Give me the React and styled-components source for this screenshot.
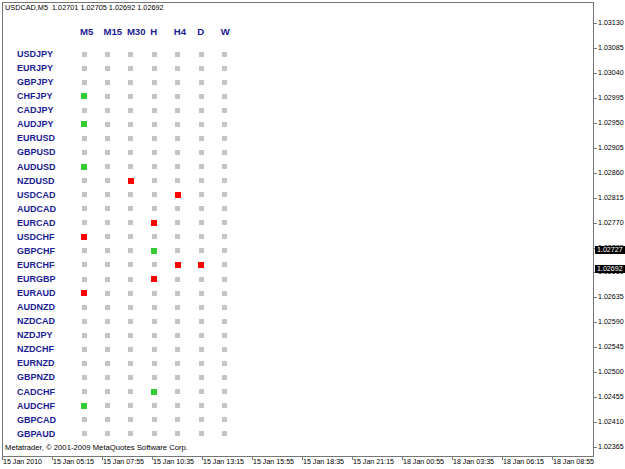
import React from 'react';
import styled, { createGlobalStyle, css } from 'styled-components';

const GlobalStyle = createGlobalStyle`
  html, body { margin: 0; padding: 0; background: #ffffff; }
  body { font-family: "Liberation Sans", Arial, sans-serif; }
  #root { width: 625px; height: 469px; }
`;

const FRAME = '#767676';
const NAVY = '#1c1c94';

const Window = styled.div`
  width: 625px;
  height: 469px;
  box-sizing: border-box;
  padding: 2px 0 0 2px;
  display: grid;
  grid-template-columns: 592px 1fr;
  grid-template-rows: 455px 1fr;
  background: #ffffff;
  overflow: hidden;
`;

const Chart = styled.section`
  box-sizing: border-box;
  border: 1px solid ${FRAME};
  display: flex;
  flex-direction: column;
  min-height: 0;
  overflow: hidden;
`;

const Title = styled.div`
  padding-left: 2px;
  height: 10px;
  font-size: 7.3px;
  line-height: 10px;
  color: #000;
  white-space: pre;
`;

const gridCols = css`
  display: grid;
  grid-template-columns: 63px repeat(7, 23.45px);
  padding-left: 14px;
`;

const HeaderGrid = styled.div`
  ${gridCols};
  margin-top: 12px;
  height: 14px;
`;

const BodyGrid = styled.div`
  ${gridCols};
  margin-top: 8px;
  grid-auto-rows: 14.07px;
`;

const HeadCell = styled.div`
  font-weight: bold;
  font-size: 9.6px;
  line-height: 14px;
  color: ${NAVY};
  white-space: nowrap;
`;

const PairCell = styled.div`
  font-weight: bold;
  font-size: 9px;
  line-height: 14.07px;
  color: ${NAVY};
  white-space: nowrap;
`;

const SquareCell = styled.div`
  width: 8px;
  display: flex;
  align-items: center;
  justify-content: center;
`;

const Square = styled.span`
  display: block;
  width: ${p => (p.$color ? 6 : 5)}px;
  height: ${p => (p.$color ? 6 : 5)}px;
  background: ${p => p.$color || '#c4c4c4'};
`;

const Footer = styled.div`
  margin-top: auto;
  margin-bottom: 3px;
  padding-left: 2px;
  height: 10px;
  font-size: 7.7px;
  line-height: 10px;
  color: #000;
  white-space: pre;
`;

const PriceAxis = styled.div`
  position: relative;
  display: flex;
  flex-direction: column;
  padding-top: 9.55px;
`;

const PriceRow = styled.div`
  height: 24.9px;
  flex: none;
  display: flex;
  align-items: center;
`;

const HTick = styled.span`
  width: 3px;
  height: 1px;
  background: ${FRAME};
  flex: none;
`;

const PriceLabel = styled.span`
  margin-left: 1px;
  font-size: 7.1px;
  line-height: 9px;
  color: #000;
  white-space: nowrap;
`;

const PriceTag = styled.div`
  position: absolute;
  left: 1px;
  right: 0;
  top: ${p => p.$top}px;
  height: 8px;
  background: #000;
  color: #fff;
  font-size: 7.1px;
  line-height: 8px;
  padding-left: 2px;
  white-space: nowrap;
`;

const TimeAxis = styled.div`
  grid-column: 1 / span 2;
  display: flex;
`;

const TimeItem = styled.div`
  width: 50px;
  flex: none;
  display: flex;
  flex-direction: column;
`;

const VTick = styled.span`
  width: 1px;
  height: 3px;
  background: ${FRAME};
`;

const TimeLabel = styled.span`
  margin-left: 1px;
  margin-top: -2px;
  font-size: 7.1px;
  line-height: 9px;
  color: #000;
  white-space: nowrap;
`;

const GREEN = '#33cc33';
const RED = '#ff0000';

const headers = ['M5', 'M15', 'M30', 'H', 'H4', 'D', 'W'];

const pairs = [
  ['USDJPY', {}],
  ['EURJPY', {}],
  ['GBPJPY', {}],
  ['CHFJPY', { 0: GREEN }],
  ['CADJPY', {}],
  ['AUDJPY', { 0: GREEN }],
  ['EURUSD', {}],
  ['GBPUSD', {}],
  ['AUDUSD', { 0: GREEN }],
  ['NZDUSD', { 2: RED }],
  ['USDCAD', { 4: RED }],
  ['AUDCAD', {}],
  ['EURCAD', { 3: RED }],
  ['USDCHF', { 0: RED }],
  ['GBPCHF', { 3: GREEN }],
  ['EURCHF', { 4: RED, 5: RED }],
  ['EURGBP', { 3: RED }],
  ['EURAUD', { 0: RED }],
  ['AUDNZD', {}],
  ['NZDCAD', {}],
  ['NZDJPY', {}],
  ['NZDCHF', {}],
  ['EURNZD', {}],
  ['GBPNZD', {}],
  ['CADCHF', { 3: GREEN }],
  ['AUDCHF', { 0: GREEN }],
  ['GBPCAD', {}],
  ['GBPAUD', {}],
];

const prices = [];
for (let i = 0; i < 18; i++) {
  prices.push((1.0313 - i * 0.00045).toFixed(5));
}

const times = [
  '15 Jan 2010', '15 Jan 05:15', '15 Jan 07:55', '15 Jan 10:35', '15 Jan 13:15',
  '15 Jan 15:55', '15 Jan 18:35', '15 Jan 21:15', '18 Jan 00:55', '18 Jan 03:35',
  '18 Jan 06:15', '18 Jan 08:55',
];

export default function App() {
  return (
    <>
      <GlobalStyle />
      <Window>
        <Chart>
          <Title>{'USDCAD,M5  1.02701 1.02705 1.02692 1.02692'}</Title>
          <HeaderGrid>
            <span />
            {headers.map(h => (
              <HeadCell key={h}>{h}</HeadCell>
            ))}
          </HeaderGrid>
          <BodyGrid>
            {pairs.map(([name, sig]) => (
              <React.Fragment key={name}>
                <PairCell>{name}</PairCell>
                {headers.map((h, i) => (
                  <SquareCell key={h}>
                    <Square $color={sig[i]} />
                  </SquareCell>
                ))}
              </React.Fragment>
            ))}
          </BodyGrid>
          <Footer>{'Metatrader, © 2001-2009 MetaQuotes Software Corp.'}</Footer>
        </Chart>
        <PriceAxis>
          {prices.map(p => (
            <PriceRow key={p}>
              <HTick />
              <PriceLabel>{p}</PriceLabel>
            </PriceRow>
          ))}
          <PriceTag $top={244}>1.02727</PriceTag>
          <PriceTag $top={263}>1.02692</PriceTag>
        </PriceAxis>
        <TimeAxis>
          {times.map(t => (
            <TimeItem key={t}>
              <VTick />
              <TimeLabel>{t}</TimeLabel>
            </TimeItem>
          ))}
        </TimeAxis>
      </Window>
    </>
  );
}
